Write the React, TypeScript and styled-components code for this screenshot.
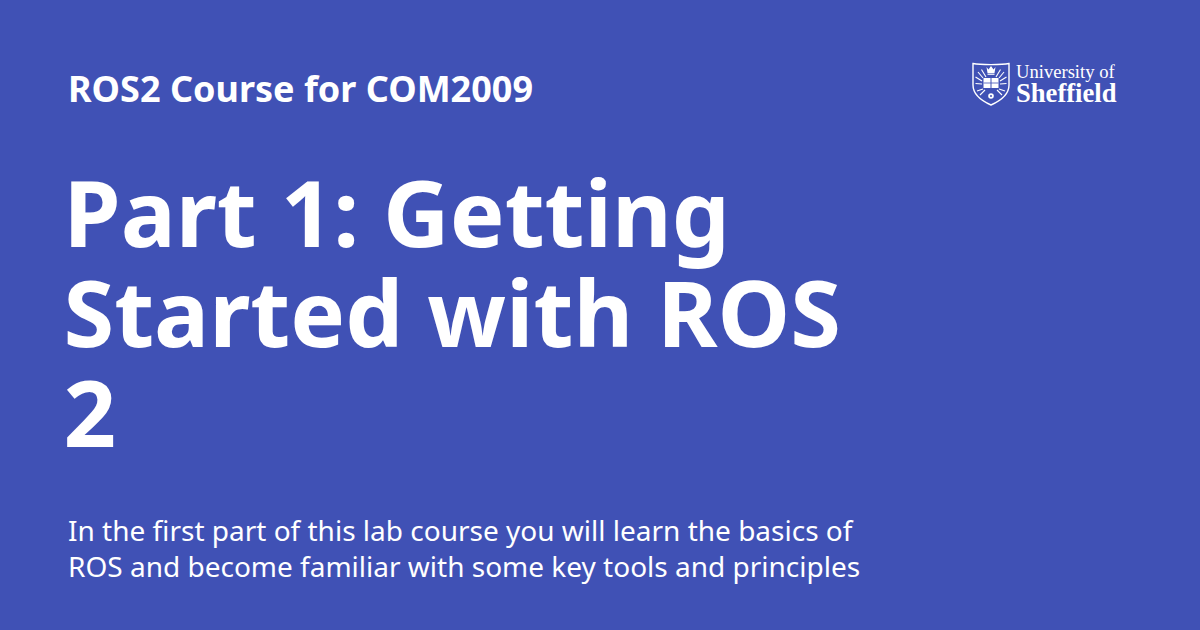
import React from 'react';
import styled, { createGlobalStyle } from 'styled-components';

const GlobalStyle = createGlobalStyle`
  html, body {
    margin: 0;
    padding: 0;
    background: #4051b5;
  }
`;

const Card = styled.div`
  width: 1200px;
  height: 630px;
  box-sizing: border-box;
  padding: 64px 84px 0 60px;
  background: #4051b5;
  color: #fff;
  font-family: 'Noto Sans', sans-serif;
  overflow: hidden;
  display: flex;
  flex-direction: column;
`;

const Header = styled.header`
  display: flex;
  justify-content: space-between;
  align-items: flex-start;
  height: 52px;
`;

const SiteName = styled.div`
  font-size: 36px;
  font-weight: 700;
  line-height: 50px;
  padding-left: 8px;
`;

const Logo = styled.div`
  display: flex;
  align-items: center;
  gap: 6px;
  margin-top: -4px;
`;

const LogoText = styled.div`
  font-family: 'Liberation Serif', serif;
  display: flex;
  flex-direction: column;
  width: 100px;
  white-space: nowrap;
`;

const LogoTop = styled.span`
  font-size: 18.6px;
  line-height: 20px;
`;

const LogoBottom = styled.span`
  font-size: 26.6px;
  line-height: 22px;
  font-weight: 700;
`;

const Title = styled.h1`
  margin: 46px 0 0;
  width: 800px;
  font-size: 92px;
  font-weight: 700;
  line-height: 100px;
  padding-left: 3.5px;
`;

const Description = styled.p`
  margin: 50px 0 0;
  padding-left: 8px;
  font-size: 28px;
  line-height: 36px;
  font-weight: 400;
`;

const rays = [
  'M11 18 L6 12',
  'M14 17 L9.5 9.5',
  'M10 21 L3.5 17',
  'M10 24 L3.5 23.5',
  'M27 18 L32 12',
  'M24 17 L28.5 9.5',
  'M28 21 L34.5 17',
  'M28 24 L34.5 23.5',
  'M11 29 L5 31',
  'M13 30 L8 35',
  'M27 29 L33 31',
  'M25 30 L30 35',
];

const Crest = () => (
  <svg width="38" height="46" viewBox="0 0 38 46" fill="none">
    <path
      d="M1 3.5 C8 5 30 5 37 3.5 L37 25 C37 34 28 41 19 45 C10 41 1 34 1 25 Z"
      stroke="#fff"
      strokeWidth="1.4"
    />
    <path d="M14.5 7 L16.5 9.5 L19 6 L21.5 9.5 L23.5 7 L22.5 13 L15.5 13 Z" fill="#fff" />
    <rect x="15.5" y="13.6" width="7" height="1.2" fill="#fff" />
    <g stroke="#fff" strokeWidth="1.1">
      {rays.map((d) => (
        <path key={d} d={d} />
      ))}
    </g>
    <rect x="11.5" y="18" width="15" height="10" fill="#fff" />
    <path d="M19 18 V28" stroke="#4051b5" strokeWidth="1" />
    <path d="M11.5 23 H26.5" stroke="#4051b5" strokeWidth="0.8" />
    <circle cx="19" cy="36" r="2.8" fill="#fff" />
    <circle cx="19" cy="36" r="1" fill="#4051b5" />
  </svg>
);

export default function App() {
  return (
    <Card>
      <GlobalStyle />
      <Header>
        <SiteName>ROS2 Course for COM2009</SiteName>
        <Logo>
          <Crest />
          <LogoText>
            <LogoTop>University of</LogoTop>
            <LogoBottom>Sheffield</LogoBottom>
          </LogoText>
        </Logo>
      </Header>
      <Title>Part 1: Getting Started with ROS 2</Title>
      <Description>
        In the first part of this lab course you will learn the basics of
        <br />
        ROS and become familiar with some key tools and principles
      </Description>
    </Card>
  );
}
